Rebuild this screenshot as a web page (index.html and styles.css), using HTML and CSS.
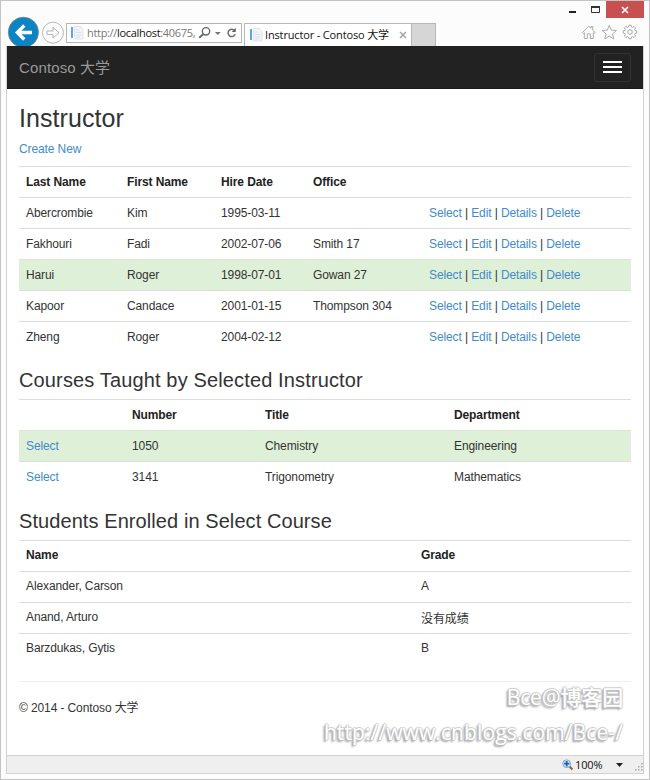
FILE: index.html
```html
<!DOCTYPE html>
<html lang="zh-CN">
<head>
<meta charset="utf-8">
<title>Instructor - Contoso 大学</title>
<link rel="stylesheet" href="styles.css">
</head>
<body>
<div class="window">
  <header class="chrome">
    <div class="browser-left">
      <svg class="nav-icons" width="60" height="31" viewBox="6 15 60 31">
        <circle cx="23.4" cy="32.3" r="15.1" fill="#0c84c4" stroke="#77808a" stroke-width=".8"/>
        <path d="M32 32.500H17M24.300 25.500L17.300 32.500L24.300 39.500" fill="none" stroke="#fff" stroke-width="3.300"/>
        <circle cx="53" cy="32.700" r="10.500" fill="#fdfdfd" stroke="#b9b9b9"/>
        <path d="M47 31h6v-3.700l6 5.400-6 5.400v-3.700h-6z" fill="#fff" stroke="#b0b0b0"/>
      </svg>
      <div class="address">
        <svg class="page-icon" width="14" height="14" viewBox="0 0 14 14"><path d="M4.500 .5h6l2.500 3v9.500h-8.500z" fill="#f1f4f8" stroke="#e0e4e9"/><path d="M6 4h3M6 6.500h5M6 9h5M6 11h4" stroke="#dae1e8"/><path d="M1 1h2v11H1z" fill="#5aa9da"/></svg>
        <span class="url">http://<b>localhost</b>:40675,</span>
        <svg class="address-tools" width="44" height="18" viewBox="197 24 44 18"><g fill="none" stroke="#686868"><circle cx="206" cy="31.300" r="3.700" stroke-width="1.400"/><path d="M203.500 34l-4.300 3.800" stroke-width="2"/><path d="M234.600 30.500A3.700 3.700 0 1 0 235.200 34.200" stroke-width="1.500"/></g><path d="M214.800 32h6l-3 3z" fill="#777"/><path d="M235.800 27.800v4.200h-4.200z" fill="#686868"/></svg>
      </div>
      <div class="tab">
        <svg class="page-icon" width="14" height="14" viewBox="0 0 14 14"><path d="M4.500 .5h6l2.500 3v9.500h-8.500z" fill="#f1f4f8" stroke="#e0e4e9"/><path d="M6 4h3M6 6.500h5M6 9h5M6 11h4" stroke="#dae1e8"/><path d="M1 1h2v11H1z" fill="#5aa9da"/></svg>
        <span class="tab-title">Instructor - Contoso 大学</span>
        <svg class="tab-close" width="8" height="8" viewBox="0 0 8 8"><path d="M1 1l6 6M7 1l-6 6" stroke="#a3a3a3" stroke-width="1.500"/></svg>
      </div>
      <div class="new-tab"></div>
    </div>
    <div class="browser-right">
      <div class="controls">
        <svg width="38" height="17" viewBox="568 1 38 17"><path d="M569 11h7v2h-7z" fill="#222"/><path d="M591.500 6.500h8v6h-8z" fill="none" stroke="#333"/><path d="M591 6h9v2h-9z" fill="#333"/></svg>
        <span class="close"><svg width="8" height="8" viewBox="0 0 8 8"><path d="M1 1l6 6M7 1l-6 6" stroke="#fff" stroke-width="1.600"/></svg></span>
      </div>
      <svg class="tools" width="58" height="16" viewBox="581 24 58 16" fill="none" stroke="#aaa" stroke-width="1">
        <path d="M582.500 32.500l6.200-6.300 2.300 2.200v-1.900h1.700v3.600l2.500 2.400-1 1-.9-.8v5.800h-3v-4.700h-3v4.700h-3v-5.800l-.9.800z"/>
        <path d="M609.300 25.300l2 4.800 5.200.4-4 3.400 1.300 5.100-4.500-2.800-4.500 2.800 1.300-5.100-4-3.400 5.200-.4z"/>
        <path d="M628.500 27l.4-1.800h2.200l.4 1.800 1 .4 1.600-1 1.500 1.500-1 1.600.4 1 1.800.4v2.200l-1.800.4-.4 1 1 1.600-1.500 1.500-1.600-1-1 .4-.4 1.800h-2.200l-.4-1.800-1-.4-1.600 1-1.500-1.500 1-1.600-.4-1-1.800-.4v-2.200l1.800-.4.4-1-1-1.600 1.500-1.500 1.600 1z"/><circle cx="630" cy="32" r="2.300"/>
      </svg>
    </div>
  </header>
  <div class="client">
    <nav class="navbar">
      <span class="brand">Contoso 大学</span>
      <span class="toggle"><i></i><i></i><i></i></span>
    </nav>
    <main class="content">
      <h2>Instructor</h2>
      <p class="create"><a>Create New</a></p>
      <table class="instructors">
        <colgroup><col class="c1"><col class="c2"><col class="c3"><col class="c4"><col></colgroup>
        <tr><th>Last Name</th><th>First Name</th><th>Hire Date</th><th>Office</th><th></th></tr>
        <tr><td>Abercrombie</td><td>Kim</td><td>1995-03-11</td><td></td><td><a>Select</a> | <a>Edit</a> | <a>Details</a> | <a>Delete</a></td></tr>
        <tr><td>Fakhouri</td><td>Fadi</td><td>2002-07-06</td><td>Smith 17</td><td><a>Select</a> | <a>Edit</a> | <a>Details</a> | <a>Delete</a></td></tr>
        <tr class="success"><td>Harui</td><td>Roger</td><td>1998-07-01</td><td>Gowan 27</td><td><a>Select</a> | <a>Edit</a> | <a>Details</a> | <a>Delete</a></td></tr>
        <tr><td>Kapoor</td><td>Candace</td><td>2001-01-15</td><td>Thompson 304</td><td><a>Select</a> | <a>Edit</a> | <a>Details</a> | <a>Delete</a></td></tr>
        <tr><td>Zheng</td><td>Roger</td><td>2004-02-12</td><td></td><td><a>Select</a> | <a>Edit</a> | <a>Details</a> | <a>Delete</a></td></tr>
      </table>
      <h3>Courses Taught by Selected Instructor</h3>
      <table class="courses">
        <colgroup><col class="c1"><col class="c2"><col class="c3"><col></colgroup>
        <tr><th></th><th>Number</th><th>Title</th><th>Department</th></tr>
        <tr class="success"><td><a>Select</a></td><td>1050</td><td>Chemistry</td><td>Engineering</td></tr>
        <tr><td><a>Select</a></td><td>3141</td><td>Trigonometry</td><td>Mathematics</td></tr>
      </table>
      <h3 class="enrolled">Students Enrolled in Select Course</h3>
      <table class="students">
        <colgroup><col class="c1"><col></colgroup>
        <tr><th>Name</th><th>Grade</th></tr>
        <tr><td>Alexander, Carson</td><td>A</td></tr>
        <tr><td>Anand, Arturo</td><td class="no-grade">没有成绩</td></tr>
        <tr><td>Barzdukas, Gytis</td><td>B</td></tr>
      </table>
      <footer class="footer">© 2014 - Contoso 大学</footer>
    </main>
    <div class="statusbar">
      <svg width="12" height="12" viewBox="0 0 12 12"><path d="M7.500 7.500l3 3" stroke="#98643e" stroke-width="2.200"/><circle cx="4.700" cy="4.700" r="3.900" fill="#d9ecfa" stroke="#7fa6c8"/><path d="M4.700 2v5.400M2 4.700h5.400" stroke="#1565b5" stroke-width="1.800"/></svg>
      <span class="zoom">100%</span>
      <svg class="caret" width="7" height="4" viewBox="0 0 7 4"><path d="M0 0h7L3.500 4z" fill="#222"/></svg>
      <svg class="grip" width="8" height="8" viewBox="0 0 8 8"><path d="M6 0h1.500v1.500H6zM3 3h1.500v1.500H3zM6 3h1.500v1.500H6zM0 6h1.500v1.500H0zM3 6h1.500v1.500H3zM6 6h1.500v1.500H6z" fill="#aaa"/></svg>
    </div>
  </div>
  <div class="watermark"><div class="mark-name">Bce@博客园</div><div class="mark-url">http://www.cnblogs.com/Bce-/</div></div>
</div>
</body>
</html>
```
FILE: styles.css
```css
* { box-sizing: border-box; }
body { margin: 0; font: 12px/17px "Liberation Sans", "Noto Sans CJK SC", sans-serif; letter-spacing: -.11px; color: #333; }
svg { display: block; flex: none; }
.window { position: relative; width: 650px; height: 780px; border: 1px solid #c4c4c4; background: #fcfcfc; overflow: hidden; }
.chrome { display: flex; justify-content: space-between; height: 45px; padding-left: 5px; font-family: "Open Sans", "Noto Sans CJK SC", sans-serif; font-size: 11px; }
.browser-left { display: flex; align-items: flex-start; }
.nav-icons { margin-top: 14px; }
.address { display: flex; align-items: center; width: 176px; height: 20px; margin-top: 22px; padding-left: 3px; border: 1px solid #b5b5b5; background: #fff; color: #777; }
.url { width: 110px; margin-left: 3px; line-height: 16px; white-space: nowrap; letter-spacing: -.32px; }
.url b { font-weight: 400; color: #111; }
.address-tools { margin-left: 1px; }
.tab { display: flex; align-items: center; width: 168px; height: 23px; margin: 22px 0 0 2px; padding-left: 4px; border: 1px solid #b8b8b8; border-bottom: 0; background: #fff; color: #111; }
.tab-title { width: 133px; margin-left: 2px; line-height: 16px; padding-bottom: 1px; white-space: nowrap; letter-spacing: -.15px; }
.tab-close { margin-left: 1px; }
.new-tab { width: 24px; height: 23px; margin-top: 22px; background: #d6d6d6; border: 1px solid #b8b8b8; border-width: 1px 1px 0 0; }
.browser-right { display: flex; flex-direction: column; align-items: flex-end; padding-right: 5px; }
.controls { display: flex; height: 17px; }
.close { display: flex; align-items: center; justify-content: center; width: 38px; background: #c75050; }
.tools { margin: 6px 5px 0 0; }
.client { width: 638px; height: 728px; margin-left: 5px; border: 1px solid #d2d2d2; border-top: 0; background: #fff; }
.navbar { display: flex; align-items: center; justify-content: space-between; height: 43px; padding: 0 12px; background: #222; color: #999; font-size: 15px; letter-spacing: .12px; border-bottom: 1px solid #1a1a1a; }
.toggle { display: flex; flex-direction: column; justify-content: center; align-items: center; gap: 3px; width: 37px; height: 29px; border: 1px solid #333; border-radius: 3px; }
.toggle i { width: 19px; height: 2px; background: #fff; }
.content { height: 666px; padding: 0 12px; }
h2, h3, p { margin: 0; font-weight: 400; }
h2 { height: 48px; padding-top: 14px; font-size: 25px; line-height: 31px; letter-spacing: .08px; }
h3 { height: 47px; padding-top: 15px; font-size: 20px; line-height: 26px; letter-spacing: .14px; }
h3.enrolled { height: 48px; padding-top: 16px; letter-spacing: .08px; }
.create { height: 29px; padding-top: 4px; }
a { color: #428bca; }
table { width: 612px; border-collapse: separate; border-spacing: 0; table-layout: fixed; }
tr { height: 31px; }
th, td { height: 31px; padding: 1px 7px 0; border-top: 1px solid #ddd; text-align: left; line-height: 17px; white-space: nowrap; }
th { color: #222; }
.students th, .students td { padding: 0 7px 1px; }
.students .no-grade { padding: 3px 7px 0; }
.success td { background: #dff0d8; border-top-color: #d9e8d3; }
.instructors .c1 { width: 101px; }
.instructors .c2 { width: 94px; }
.instructors .c3 { width: 92px; }
.instructors .c4 { width: 116px; }
.courses .c1 { width: 106px; }
.courses .c2 { width: 133px; }
.courses .c3 { width: 189px; }
.students .c1 { width: 395px; }
.footer { margin-top: 17px; padding-top: 18px; border-top: 1px solid #eee; }
.statusbar { display: flex; align-items: center; height: 18px; padding-left: 555px; background: #efefef; border-top: 1px solid #d2d2d2; color: #111; font: 11px/16px "Open Sans", sans-serif; }
.zoom { width: 40px; margin-left: 1px; }
.caret { margin-left: 2px; }
.grip { margin: 5px 0 0 12px; }
.watermark { position: absolute; right: 26px; top: 679px; text-align: right; color: #fff; font: 500 21px/35px "Open Sans", "Noto Sans CJK SC", sans-serif; letter-spacing: -.15px; text-shadow: -1px 0 1px #bbb, 1px 0 1px #ccc, 0 -1px 1px #ccc, 0 1px 1px #bbb, -2px 2px 2px #999; white-space: nowrap; }
.mark-url { letter-spacing: .1px; }
```
